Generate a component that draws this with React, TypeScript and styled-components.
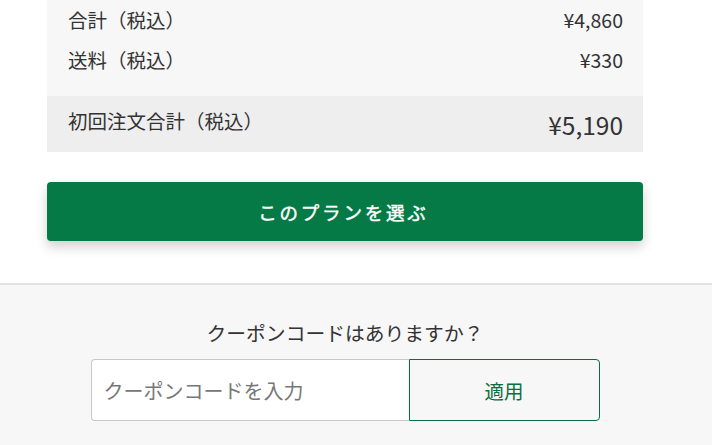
import React from "react";
import styled, { createGlobalStyle } from "styled-components";

const GlobalStyle = createGlobalStyle`
  html, body {
    margin: 0;
    padding: 0;
    background: #ffffff;
  }
  body {
    font-family: "Noto Sans CJK JP", "Noto Sans", sans-serif;
    color: #333333;
  }
  * { box-sizing: border-box; }
`;

const Page = styled.div`
  width: 712px;
  height: 445px;
  overflow: hidden;
  display: flex;
  flex-direction: column;
`;

const PlanSection = styled.section`
  background: #ffffff;
  padding-bottom: 42px;
  border-bottom: 2px solid #e2e2e2;
`;

const Container = styled.div`
  width: 596px;
  margin-left: 47px;
`;

const Summary = styled.div`
  background: #f7f7f7;
  padding-bottom: 16px;
`;

const Row = styled.div`
  height: 40px;
  padding: 0 20px 0 21px;
  display: flex;
  align-items: center;
  justify-content: space-between;
  font-size: 19.5px;
  line-height: 1;
`;

const TotalRow = styled.div`
  height: 56px;
  padding: 0 20px 0 21px;
  background: #eeeeee;
  display: flex;
  align-items: center;
  justify-content: space-between;
  line-height: 1;
`;

const TotalLabel = styled.span`
  font-size: 19.5px;
  margin-top: -7px;
`;

const TotalValue = styled.span`
  font-size: 24.5px;
  margin-top: 2px;
`;

const SelectButton = styled.button`
  display: flex;
  align-items: center;
  justify-content: center;
  width: 100%;
  height: 59px;
  margin-top: 30px;
  border: none;
  border-radius: 4px;
  background: #067a46;
  color: #ffffff;
  font-family: inherit;
  font-size: 18.5px;
  font-weight: 400;
  -webkit-text-stroke: 0.45px #ffffff;
  letter-spacing: 0.15em;
  padding-left: 0.15em;
  box-shadow: 0 1px 0 #d8dcd6, 0 6px 12px rgba(0, 0, 0, 0.18);
  cursor: pointer;
`;

const CouponSection = styled.section`
  flex: 1;
  background: #f7f7f7;
`;

const CouponHeading = styled.p`
  margin: 0;
  padding-top: 34px;
  text-align: center;
  font-size: 19.8px;
  line-height: 28px;
  color: #333333;
`;

const CouponForm = styled.form`
  display: flex;
  justify-content: center;
  margin-top: 12px;
`;

const CouponInput = styled.input`
  width: 318px;
  height: 62px;
  padding: 0 12px;
  border: 1px solid #c8c8c8;
  border-right: none;
  border-radius: 4px 0 0 4px;
  background: #ffffff;
  font-family: inherit;
  font-size: 20px;
  color: #333333;
  outline: none;
  &::placeholder {
    color: #777777;
  }
`;

const ApplyButton = styled.button`
  width: 191px;
  height: 62px;
  border: 1px solid #0d6b42;
  border-radius: 0 4px 4px 0;
  background: #f7f7f7;
  color: #0b6e41;
  font-family: inherit;
  font-size: 19.5px;
  cursor: pointer;
`;

export default function App() {
  return (
    <>
      <GlobalStyle />
      <Page>
        <PlanSection>
          <Container>
            <Summary>
              <Row>
                <span>合計（税込）</span>
                <span>¥4,860</span>
              </Row>
              <Row>
                <span>送料（税込）</span>
                <span>¥330</span>
              </Row>
            </Summary>
            <TotalRow>
              <TotalLabel>初回注文合計（税込）</TotalLabel>
              <TotalValue>¥5,190</TotalValue>
            </TotalRow>
            <SelectButton type="button">このプランを選ぶ</SelectButton>
          </Container>
        </PlanSection>
        <CouponSection>
          <Container>
            <CouponHeading>クーポンコードはありますか？</CouponHeading>
            <CouponForm onSubmit={(e) => e.preventDefault()}>
              <CouponInput type="text" placeholder="クーポンコードを入力" />
              <ApplyButton type="submit">適用</ApplyButton>
            </CouponForm>
          </Container>
        </CouponSection>
      </Page>
    </>
  );
}
